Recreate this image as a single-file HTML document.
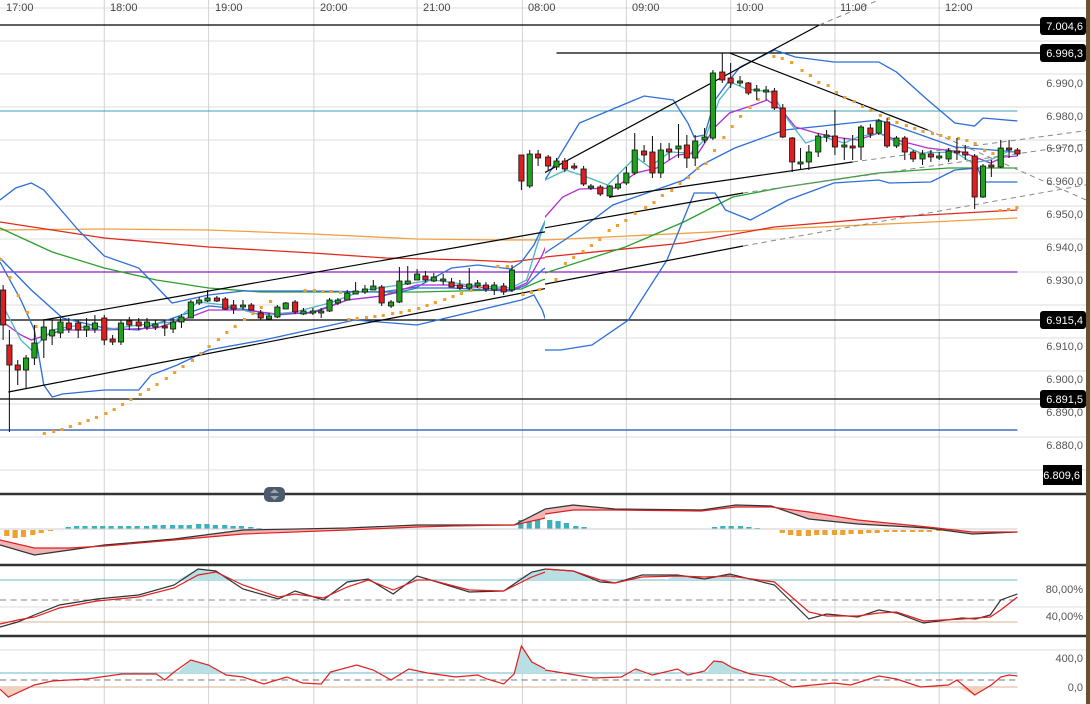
<!DOCTYPE html>
<html><head><meta charset="utf-8"><style>
html,body{margin:0;padding:0;background:#fff;}
svg{display:block;font-family:"Liberation Sans",Arial,sans-serif;}
.ax{font-size:11px;fill:#555;text-anchor:end;}
.tm{font-size:11px;fill:#444;}
.bx{font-size:11px;fill:#fff;text-anchor:end;}
.g rect{fill:#1fa31f;stroke:#111;stroke-width:.8}
.r rect{fill:#dd1f1f;stroke:#111;stroke-width:.8}
line.w{stroke:#111;stroke-width:1}
</style></head><body>
<svg width="1090" height="704" viewBox="0 0 1090 704" xmlns="http://www.w3.org/2000/svg" xmlns:xlink="http://www.w3.org/1999/xlink">
<defs>
<clipPath id="cl"><rect x="0" y="0" width="545" height="704"/></clipPath>
<clipPath id="cr"><rect x="545" y="0" width="545" height="704"/></clipPath>
<g id="d">
<!-- horizontal grid -->
<g stroke="#dcdcdc" stroke-width="1">
<line x1="0" y1="8" x2="1087" y2="8"/><line x1="0" y1="41" x2="1087" y2="41"/><line x1="0" y1="74" x2="1087" y2="74"/><line x1="0" y1="107" x2="1087" y2="107"/><line x1="0" y1="140" x2="1087" y2="140"/><line x1="0" y1="173" x2="1087" y2="173"/><line x1="0" y1="206" x2="1087" y2="206"/><line x1="0" y1="239" x2="1087" y2="239"/><line x1="0" y1="272" x2="1087" y2="272"/><line x1="0" y1="305" x2="1087" y2="305"/><line x1="0" y1="338" x2="1087" y2="338"/><line x1="0" y1="371" x2="1087" y2="371"/><line x1="0" y1="404" x2="1087" y2="404"/><line x1="0" y1="437" x2="1087" y2="437"/><line x1="0" y1="470" x2="1087" y2="470"/>
<line x1="0" y1="607" x2="1087" y2="607"/><line x1="0" y1="650" x2="1087" y2="650"/>
</g>
<g stroke="#d4d4d4" stroke-width="1">
<line x1="100" y1="0" x2="100" y2="704"/><line x1="200" y1="0" x2="200" y2="704"/><line x1="301" y1="0" x2="301" y2="704"/><line x1="400" y1="0" x2="400" y2="704"/><line x1="501" y1="0" x2="501" y2="704"/><line x1="623" y1="0" x2="623" y2="704"/><line x1="723" y1="0" x2="723" y2="704"/><line x1="823" y1="0" x2="823" y2="704"/><line x1="923" y1="0" x2="923" y2="704"/>
</g>

<line x1="0" y1="25" x2="1040" y2="25" stroke="#000" stroke-width="1.3"/>
<line x1="556" y1="53" x2="1040" y2="53" stroke="#000" stroke-width="1.3"/>
<line x1="0" y1="111" x2="998" y2="111" stroke="#3aa0b8" stroke-width="1"/>
<line x1="0" y1="272" x2="998" y2="272" stroke="#8a1fc8" stroke-width="1.2"/>
<line x1="0" y1="320" x2="1040" y2="320" stroke="#000" stroke-width="1.3"/>
<line x1="0" y1="399" x2="1040" y2="399" stroke="#000" stroke-width="1.3"/>
<line x1="0" y1="430" x2="998" y2="430" stroke="#1f50b0" stroke-width="1.3"/>

<g fill="none" stroke-width="1.3">
<polyline stroke="#f0a040" points="0,230 100,229 200,230 300,234 400,239 480,240 545,240 745,230 998,218"/>
<polyline stroke="#e02a1e" points="0,222 100,238 200,247 300,253 370,258 450,260 490,262 520,258 545,257 678,243 765,227 878,217 998,210"/>
<polyline stroke="#2ca02c" points="0,228 50,252 100,268 150,280 200,288 250,292 300,292 400,292 480,290 500,289 520,280 545,273 622,247 678,222 725,197 775,187 865,173 932,168 998,168"/>
<polyline stroke="#2f6fd8" points="0,200 15,188 30,183 42,190 75,230 100,256 133,268 165,303 200,295 233,291 300,291 366,292 400,287 433,268 458,265 490,269 500,262 512,245 530,205 545,180 578,123 640,96 668,100 682,123 688,137 698,135 708,100 722,80 732,67 765,50 785,57 822,62 865,62 882,72 912,100 938,123 957,126 965,118 998,121"/>
<polyline stroke="#2f6fd8" points="0,258 30,290 60,318 100,328 133,330 166,318 200,306 233,309 266,315 300,312 333,300 366,296 400,288 433,288 466,290 490,291 505,285 520,270 545,253 578,230 610,205 678,180 695,165 727,148 775,130 865,120 938,147 998,152"/>
<polyline stroke="#2f6fd8" points="0,262 20,300 33,330 42,385 50,397 60,394 100,390 133,390 145,375 170,365 200,350 253,340 340,320 400,325 500,300 512,295 520,310 530,340 545,350 560,350 590,345 625,320 662,260 688,193 708,193 718,210 742,220 778,200 822,183 865,180 875,183 915,182 938,170 960,168 965,182 998,182"/>
<polyline stroke="#b030d0" points="0,320 20,335 30,340 60,330 100,330 150,328 180,318 200,310 233,310 266,314 300,313 333,300 366,296 400,285 433,285 466,288 490,290 505,283 520,255 530,230 545,217 562,197 578,189 612,188 632,173 652,168 672,155 692,153 708,127 722,113 745,105 758,100 772,110 785,127 805,133 822,137 845,140 865,133 882,140 912,148 945,152 972,163 985,157 998,156"/>
<polyline stroke="#4fb8c4" points="0,300 20,340 30,350 50,330 70,326 100,330 133,325 166,322 190,302 216,305 250,315 283,312 316,303 350,290 383,285 416,280 450,285 490,288 505,280 515,245 530,200 545,180 565,170 585,177 605,185 632,157 645,167 665,152 685,153 698,140 712,100 725,83 738,89 762,92 778,120 795,143 812,137 832,143 845,137 865,133 882,142 905,153 938,152 955,163 972,160 988,152 998,152"/>
</g>

<g stroke="#000" stroke-width="1.2" fill="none">
<line x1="42" y1="320" x2="735" y2="193"/>
<line x1="8" y1="392" x2="735" y2="246"/>
<line x1="607" y1="197" x2="840" y2="162"/>
<line x1="528" y1="182" x2="808" y2="25"/>
<line x1="722" y1="53" x2="912" y2="130"/>
</g>
<g stroke="#888" stroke-width="1" stroke-dasharray="5,4" fill="none">
<line x1="735" y1="246" x2="1090" y2="180"/>
<line x1="840" y1="162" x2="1090" y2="127"/>
<line x1="808" y1="25" x2="865" y2="0"/>
<line x1="912" y1="130" x2="1090" y2="212"/>
<line x1="735" y1="193" x2="1090" y2="140"/>
</g>

<g fill="#f0a030">
<rect x="-1" y="258" width="3" height="3"/><rect x="8" y="276" width="3" height="3"/><rect x="16" y="294" width="3" height="3"/><rect x="25" y="311" width="3" height="3"/><rect x="33" y="325" width="3" height="3"/>
<rect x="41" y="432" width="3" height="3"/><rect x="50" y="430" width="3" height="3"/><rect x="58" y="428" width="3" height="3"/><rect x="66" y="425" width="3" height="3"/><rect x="75" y="422" width="3" height="3"/><rect x="83" y="419" width="3" height="3"/><rect x="91" y="416" width="3" height="3"/><rect x="100" y="412" width="3" height="3"/><rect x="108" y="408" width="3" height="3"/><rect x="116" y="403" width="3" height="3"/><rect x="124" y="398" width="3" height="3"/><rect x="133" y="393" width="3" height="3"/><rect x="141" y="388" width="3" height="3"/><rect x="149" y="383" width="3" height="3"/><rect x="158" y="377" width="3" height="3"/><rect x="166" y="371" width="3" height="3"/><rect x="174" y="365" width="3" height="3"/><rect x="183" y="359" width="3" height="3"/><rect x="191" y="352" width="3" height="3"/><rect x="199" y="345" width="3" height="3"/><rect x="208" y="338" width="3" height="3"/><rect x="216" y="331" width="3" height="3"/><rect x="224" y="325" width="3" height="3"/><rect x="233" y="318" width="3" height="3"/><rect x="241" y="312" width="3" height="3"/><rect x="249" y="306" width="3" height="3"/><rect x="258" y="300" width="3" height="3"/>
<rect x="291" y="289" width="3" height="3"/><rect x="300" y="289" width="3" height="3"/><rect x="308" y="290" width="3" height="3"/><rect x="316" y="290" width="3" height="3"/><rect x="325" y="291" width="3" height="3"/>
<rect x="333" y="318" width="3" height="3"/><rect x="341" y="317" width="3" height="3"/><rect x="350" y="316" width="3" height="3"/><rect x="358" y="315" width="3" height="3"/><rect x="366" y="314" width="3" height="3"/><rect x="375" y="312" width="3" height="3"/><rect x="383" y="311" width="3" height="3"/><rect x="391" y="309" width="3" height="3"/><rect x="400" y="307" width="3" height="3"/><rect x="408" y="304" width="3" height="3"/><rect x="416" y="301" width="3" height="3"/><rect x="425" y="298" width="3" height="3"/><rect x="433" y="295" width="3" height="3"/><rect x="441" y="292" width="3" height="3"/><rect x="450" y="289" width="3" height="3"/><rect x="458" y="286" width="3" height="3"/><rect x="476" y="265" width="3" height="3"/><rect x="485" y="265" width="3" height="3"/><rect x="500" y="293" width="3" height="3"/><rect x="508" y="291" width="3" height="3"/><rect x="516" y="288" width="3" height="3"/>
<rect x="554" y="278" width="3" height="3"/><rect x="563" y="262" width="3" height="3"/><rect x="571" y="256" width="3" height="3"/><rect x="580" y="250" width="3" height="3"/><rect x="588" y="244" width="3" height="3"/><rect x="596" y="238" width="3" height="3"/><rect x="605" y="229" width="3" height="3"/><rect x="613" y="224" width="3" height="3"/><rect x="621" y="219" width="3" height="3"/><rect x="630" y="212" width="3" height="3"/><rect x="640" y="206" width="3" height="3"/><rect x="648" y="201" width="3" height="3"/><rect x="656" y="194" width="3" height="3"/><rect x="665" y="189" width="3" height="3"/><rect x="673" y="182" width="3" height="3"/><rect x="681" y="176" width="3" height="3"/><rect x="690" y="167" width="3" height="3"/><rect x="698" y="162" width="3" height="3"/><rect x="706" y="149" width="3" height="3"/><rect x="715" y="136" width="3" height="3"/><rect x="723" y="125" width="3" height="3"/><rect x="731" y="115" width="3" height="3"/><rect x="740" y="106" width="3" height="3"/><rect x="748" y="98" width="3" height="3"/>
<rect x="763" y="55" width="3" height="3"/><rect x="771" y="57" width="3" height="3"/><rect x="780" y="61" width="3" height="3"/><rect x="790" y="69" width="3" height="3"/><rect x="798" y="74" width="3" height="3"/><rect x="806" y="81" width="3" height="3"/><rect x="815" y="84" width="3" height="3"/><rect x="823" y="91" width="3" height="3"/><rect x="831" y="96" width="3" height="3"/><rect x="840" y="100" width="3" height="3"/><rect x="848" y="105" width="3" height="3"/><rect x="856" y="109" width="3" height="3"/><rect x="865" y="114" width="3" height="3"/><rect x="873" y="117" width="3" height="3"/><rect x="881" y="121" width="3" height="3"/><rect x="890" y="124" width="3" height="3"/><rect x="898" y="127" width="3" height="3"/><rect x="906" y="130" width="3" height="3"/><rect x="915" y="132" width="3" height="3"/><rect x="923" y="134" width="3" height="3"/><rect x="931" y="136" width="3" height="3"/><rect x="940" y="137" width="3" height="3"/><rect x="948" y="139" width="3" height="3"/><rect x="956" y="142" width="3" height="3"/><rect x="965" y="149" width="3" height="3"/><rect x="973" y="152" width="3" height="3"/>
<rect x="980" y="209" width="3" height="3"/><rect x="988" y="208" width="3" height="3"/><rect x="996" y="206" width="3" height="3"/>
</g>

<g>
<line class="w" x1="9" y1="330" x2="9" y2="432"/>
<line class="w" x1="3" y1="285" x2="3" y2="340"/><line class="w" x1="17" y1="360" x2="17" y2="385"/><line class="w" x1="25" y1="355" x2="25" y2="388"/><line class="w" x1="33" y1="325" x2="33" y2="365"/><line class="w" x1="42" y1="319" x2="42" y2="358"/><line class="w" x1="50" y1="320" x2="50" y2="345"/><line class="w" x1="58" y1="318" x2="58" y2="338"/><line class="w" x1="66" y1="318" x2="66" y2="333"/><line class="w" x1="75" y1="320" x2="75" y2="338"/><line class="w" x1="83" y1="318" x2="83" y2="337"/><line class="w" x1="91" y1="315" x2="91" y2="333"/><line class="w" x1="100" y1="315" x2="100" y2="345"/><line class="w" x1="108" y1="335" x2="108" y2="345"/><line class="w" x1="116" y1="320" x2="116" y2="345"/><line class="w" x1="124" y1="317" x2="124" y2="330"/><line class="w" x1="133" y1="318" x2="133" y2="330"/><line class="w" x1="141" y1="318" x2="141" y2="330"/><line class="w" x1="149" y1="320" x2="149" y2="330"/><line class="w" x1="158" y1="320" x2="158" y2="336"/><line class="w" x1="166" y1="318" x2="166" y2="333"/><line class="w" x1="174" y1="314" x2="174" y2="328"/><line class="w" x1="183" y1="300" x2="183" y2="318"/><line class="w" x1="191" y1="297" x2="191" y2="305"/><line class="w" x1="199" y1="290" x2="199" y2="302"/><line class="w" x1="208" y1="296" x2="208" y2="302"/><line class="w" x1="216" y1="297" x2="216" y2="310"/><line class="w" x1="224" y1="300" x2="224" y2="314"/><line class="w" x1="233" y1="300" x2="233" y2="310"/><line class="w" x1="241" y1="303" x2="241" y2="310"/><line class="w" x1="250" y1="310" x2="250" y2="320"/><line class="w" x1="258" y1="313" x2="258" y2="320"/><line class="w" x1="266" y1="305" x2="266" y2="318"/><line class="w" x1="274" y1="302" x2="274" y2="309"/><line class="w" x1="283" y1="300" x2="283" y2="314"/><line class="w" x1="291" y1="308" x2="291" y2="315"/><line class="w" x1="300" y1="308" x2="300" y2="315"/><line class="w" x1="308" y1="308" x2="308" y2="318"/><line class="w" x1="316" y1="298" x2="316" y2="312"/><line class="w" x1="324" y1="298" x2="324" y2="305"/><line class="w" x1="333" y1="290" x2="333" y2="300"/><line class="w" x1="341" y1="282" x2="341" y2="294"/><line class="w" x1="350" y1="285" x2="350" y2="294"/><line class="w" x1="358" y1="280" x2="358" y2="290"/><line class="w" x1="366" y1="285" x2="366" y2="306"/><line class="w" x1="375" y1="300" x2="375" y2="308"/><line class="w" x1="383" y1="267" x2="383" y2="303"/><line class="w" x1="391" y1="266" x2="391" y2="285"/><line class="w" x1="400" y1="269" x2="400" y2="280"/><line class="w" x1="408" y1="271" x2="408" y2="282"/><line class="w" x1="416" y1="273" x2="416" y2="282"/><line class="w" x1="425" y1="274" x2="425" y2="285"/><line class="w" x1="433" y1="278" x2="433" y2="287"/><line class="w" x1="441" y1="280" x2="441" y2="290"/><line class="w" x1="450" y1="268" x2="450" y2="290"/><line class="w" x1="458" y1="280" x2="458" y2="288"/><line class="w" x1="466" y1="282" x2="466" y2="292"/><line class="w" x1="474" y1="282" x2="474" y2="295"/><line class="w" x1="483" y1="283" x2="483" y2="295"/><line class="w" x1="491" y1="265" x2="491" y2="292"/>
<line class="w" x1="500" y1="155" x2="500" y2="190"/><line class="w" x1="508" y1="150" x2="508" y2="188"/><line class="w" x1="516" y1="150" x2="516" y2="166"/><line class="w" x1="548" y1="155" x2="548" y2="170"/><line class="w" x1="556" y1="158" x2="556" y2="170"/><line class="w" x1="564" y1="158" x2="564" y2="172"/><line class="w" x1="573" y1="163" x2="573" y2="170"/><line class="w" x1="582" y1="166" x2="582" y2="186"/><line class="w" x1="589" y1="184" x2="589" y2="190"/><line class="w" x1="598" y1="185" x2="598" y2="196"/><line class="w" x1="607" y1="185" x2="607" y2="198"/><line class="w" x1="615" y1="175" x2="615" y2="190"/><line class="w" x1="623" y1="167" x2="623" y2="185"/><line class="w" x1="631" y1="133" x2="631" y2="175"/><line class="w" x1="640" y1="145" x2="640" y2="162"/><line class="w" x1="648" y1="136" x2="648" y2="178"/><line class="w" x1="656" y1="143" x2="656" y2="178"/><line class="w" x1="664" y1="143" x2="664" y2="160"/><line class="w" x1="673" y1="124" x2="673" y2="158"/><line class="w" x1="681" y1="135" x2="681" y2="168"/><line class="w" x1="689" y1="135" x2="689" y2="166"/><line class="w" x1="698" y1="128" x2="698" y2="143"/><line class="w" x1="706" y1="70" x2="706" y2="140"/><line class="w" x1="715" y1="53" x2="715" y2="83"/><line class="w" x1="723" y1="63" x2="723" y2="88"/><line class="w" x1="732" y1="76" x2="732" y2="86"/><line class="w" x1="740" y1="82" x2="740" y2="95"/><line class="w" x1="748" y1="85" x2="748" y2="100"/><line class="w" x1="757" y1="86" x2="757" y2="100"/><line class="w" x1="765" y1="88" x2="765" y2="110"/><line class="w" x1="773" y1="104" x2="773" y2="138"/><line class="w" x1="782" y1="137" x2="782" y2="172"/><line class="w" x1="790" y1="148" x2="790" y2="170"/><line class="w" x1="798" y1="145" x2="798" y2="170"/><line class="w" x1="807" y1="133" x2="807" y2="157"/><line class="w" x1="815" y1="130" x2="815" y2="142"/><line class="w" x1="823" y1="110" x2="823" y2="155"/><line class="w" x1="832" y1="138" x2="832" y2="160"/><line class="w" x1="840" y1="135" x2="840" y2="160"/><line class="w" x1="848" y1="125" x2="848" y2="160"/><line class="w" x1="857" y1="124" x2="857" y2="138"/><line class="w" x1="865" y1="119" x2="865" y2="135"/><line class="w" x1="873" y1="118" x2="873" y2="148"/><line class="w" x1="882" y1="136" x2="882" y2="148"/><line class="w" x1="890" y1="136" x2="890" y2="160"/><line class="w" x1="898" y1="150" x2="898" y2="162"/><line class="w" x1="907" y1="150" x2="907" y2="165"/><line class="w" x1="915" y1="150" x2="915" y2="162"/><line class="w" x1="923" y1="152" x2="923" y2="160"/><line class="w" x1="932" y1="148" x2="932" y2="162"/><line class="w" x1="940" y1="138" x2="940" y2="160"/><line class="w" x1="948" y1="145" x2="948" y2="160"/><line class="w" x1="957" y1="154" x2="957" y2="209"/><line class="w" x1="965" y1="164" x2="965" y2="198"/><line class="w" x1="973" y1="160" x2="973" y2="177"/><line class="w" x1="982" y1="140" x2="982" y2="168"/><line class="w" x1="990" y1="140" x2="990" y2="158"/><line class="w" x1="998" y1="148" x2="998" y2="156"/>
</g>
<g class="r">
<rect x="0.5" y="290" width="5" height="35"/><rect x="6.5" y="345" width="5" height="20"/><rect x="14.5" y="365" width="5" height="5"/><rect x="63.5" y="323" width="5" height="6"/><rect x="72.5" y="323" width="5" height="7"/><rect x="97.5" y="318" width="5" height="22"/><rect x="105.5" y="339" width="5" height="3"/><rect x="121.5" y="321" width="5" height="4"/><rect x="130.5" y="322" width="5" height="4"/><rect x="155.5" y="326" width="5" height="2"/><rect x="205.5" y="298" width="5" height="3"/><rect x="213.5" y="299" width="5" height="10"/><rect x="221.5" y="305" width="5" height="4"/><rect x="238.5" y="305" width="5" height="5"/><rect x="247.5" y="313" width="5" height="5"/><rect x="280.5" y="302" width="5" height="10"/><rect x="363.5" y="287" width="5" height="16"/><rect x="405.5" y="276" width="5" height="4"/><rect x="430.5" y="282" width="5" height="5"/><rect x="438.5" y="285" width="5" height="3"/><rect x="463.5" y="285" width="5" height="4"/><rect x="480.5" y="286" width="5" height="6"/>
<rect x="497.5" y="155" width="5" height="26"/><rect x="513.5" y="154" width="5" height="4"/><rect x="545.5" y="157" width="5" height="9"/><rect x="561.5" y="161" width="5" height="8"/><rect x="570.5" y="166" width="5" height="2"/><rect x="579.5" y="169" width="5" height="15"/><rect x="595.5" y="187" width="5" height="7"/><rect x="637.5" y="151" width="5" height="4"/><rect x="645.5" y="152" width="5" height="21"/><rect x="661.5" y="149" width="5" height="3"/><rect x="678.5" y="145" width="5" height="13"/><rect x="712.5" y="72" width="5" height="8"/><rect x="720.5" y="78" width="5" height="5"/><rect x="737.5" y="83" width="5" height="10"/><rect x="762.5" y="91" width="5" height="17"/><rect x="770.5" y="108" width="5" height="29"/><rect x="779.5" y="138" width="5" height="24"/><rect x="820.5" y="136" width="5" height="11"/><rect x="837.5" y="146" width="5" height="2"/><rect x="854.5" y="128" width="5" height="6"/><rect x="870.5" y="122" width="5" height="24"/><rect x="887.5" y="138" width="5" height="14"/><rect x="895.5" y="152" width="5" height="7"/><rect x="912.5" y="154" width="5" height="3"/><rect x="937.5" y="151" width="5" height="2"/><rect x="945.5" y="152" width="5" height="3"/><rect x="954.5" y="156" width="5" height="41"/><rect x="970.5" y="165" width="5" height="2"/><rect x="987.5" y="148" width="5" height="2"/><rect x="995.5" y="150" width="5" height="4"/>
</g>
<g class="g">
<rect x="22.5" y="358" width="5" height="12"/><rect x="30.5" y="343" width="5" height="15"/><rect x="39.5" y="327" width="5" height="13"/><rect x="47.5" y="330" width="5" height="6"/><rect x="55.5" y="322" width="5" height="11"/><rect x="80.5" y="326" width="5" height="4"/><rect x="88.5" y="323" width="5" height="6"/><rect x="113.5" y="323" width="5" height="19"/><rect x="138.5" y="322" width="5" height="5"/><rect x="146.5" y="324" width="5" height="3"/><rect x="163.5" y="322" width="5" height="7"/><rect x="171.5" y="317" width="5" height="5"/><rect x="180.5" y="302" width="5" height="16"/><rect x="188.5" y="300" width="5" height="3"/><rect x="196.5" y="298" width="5" height="3"/><rect x="230.5" y="305" width="5" height="2"/><rect x="255.5" y="316" width="5" height="3"/><rect x="263.5" y="307" width="5" height="10"/><rect x="271.5" y="303" width="5" height="6"/><rect x="288.5" y="311" width="5" height="3"/><rect x="297.5" y="311" width="5" height="2"/><rect x="305.5" y="311" width="5" height="2"/><rect x="313.5" y="300" width="5" height="11"/><rect x="321.5" y="300" width="5" height="3"/><rect x="330.5" y="293" width="5" height="7"/><rect x="338.5" y="291" width="5" height="3"/><rect x="347.5" y="289" width="5" height="3"/><rect x="355.5" y="286" width="5" height="4"/><rect x="372.5" y="302" width="5" height="4"/><rect x="380.5" y="281" width="5" height="21"/><rect x="388.5" y="281" width="5" height="3"/><rect x="397.5" y="274" width="5" height="6"/><rect x="413.5" y="277" width="5" height="4"/><rect x="422.5" y="279" width="5" height="2"/><rect x="447.5" y="284" width="5" height="4"/><rect x="455.5" y="283" width="5" height="3"/><rect x="471.5" y="285" width="5" height="5"/><rect x="488.5" y="270" width="5" height="20"/>
<rect x="505.5" y="154" width="5" height="32"/><rect x="553.5" y="161" width="5" height="6"/><rect x="586.5" y="186" width="5" height="2"/><rect x="604.5" y="186" width="5" height="10"/><rect x="612.5" y="184" width="5" height="4"/><rect x="620.5" y="173" width="5" height="10"/><rect x="628.5" y="150" width="5" height="23"/><rect x="653.5" y="150" width="5" height="23"/><rect x="670.5" y="146" width="5" height="3"/><rect x="686.5" y="141" width="5" height="17"/><rect x="695.5" y="137" width="5" height="3"/><rect x="703.5" y="73" width="5" height="65"/><rect x="729.5" y="81" width="5" height="2"/><rect x="745.5" y="89" width="5" height="2"/><rect x="754.5" y="90" width="5" height="2"/><rect x="787.5" y="162" width="5" height="2"/><rect x="795.5" y="152" width="5" height="10"/><rect x="804.5" y="136" width="5" height="16"/><rect x="812.5" y="135" width="5" height="2"/><rect x="829.5" y="145" width="5" height="2"/><rect x="845.5" y="127" width="5" height="20"/><rect x="862.5" y="121" width="5" height="12"/><rect x="879.5" y="138" width="5" height="8"/><rect x="904.5" y="154" width="5" height="5"/><rect x="920.5" y="156" width="5" height="2"/><rect x="929.5" y="151" width="5" height="8"/><rect x="962.5" y="166" width="5" height="31"/><rect x="979.5" y="148" width="5" height="19"/>
</g>

<!-- MACD -->
<g fill="#f0a030"><rect x="4" y="530" width="5" height="6"/><rect x="12" y="530" width="5" height="8"/><rect x="20" y="530" width="5" height="7"/><rect x="29" y="530" width="5" height="5"/><rect x="37" y="530" width="5" height="3"/><rect x="46" y="530" width="5" height="1"/>
<rect x="770" y="530" width="5" height="3"/><rect x="778" y="530" width="5" height="5"/><rect x="786" y="530" width="5" height="6"/><rect x="795" y="530" width="5" height="6"/><rect x="803" y="530" width="5" height="5"/><rect x="811" y="530" width="5" height="5"/><rect x="820" y="530" width="5" height="5"/><rect x="828" y="530" width="5" height="5"/><rect x="836" y="530" width="5" height="4"/><rect x="845" y="530" width="5" height="4"/><rect x="853" y="530" width="5" height="3"/><rect x="861" y="530" width="5" height="3"/><rect x="870" y="530" width="5" height="2"/><rect x="878" y="530" width="5" height="2"/><rect x="886" y="530" width="5" height="2"/><rect x="895" y="530" width="5" height="2"/><rect x="903" y="530" width="5" height="2"/><rect x="911" y="530" width="5" height="2"/><rect x="920" y="530" width="5" height="1"/><rect x="928" y="530" width="5" height="1"/></g>
<g fill="#3cb0bc"><rect x="63" y="527" width="5" height="2"/><rect x="71" y="526" width="5" height="3"/><rect x="79" y="526" width="5" height="3"/><rect x="88" y="526" width="5" height="3"/><rect x="96" y="526" width="5" height="3"/><rect x="104" y="526" width="5" height="3"/><rect x="113" y="526" width="5" height="3"/><rect x="121" y="526" width="5" height="3"/><rect x="129" y="526" width="5" height="3"/><rect x="138" y="526" width="5" height="3"/><rect x="146" y="525" width="5" height="4"/><rect x="154" y="525" width="5" height="4"/><rect x="163" y="525" width="5" height="4"/><rect x="171" y="525" width="5" height="4"/><rect x="179" y="525" width="5" height="4"/><rect x="188" y="524" width="5" height="5"/><rect x="196" y="524" width="5" height="5"/><rect x="204" y="525" width="5" height="4"/><rect x="213" y="525" width="5" height="4"/><rect x="221" y="526" width="5" height="3"/><rect x="229" y="526" width="5" height="3"/><rect x="238" y="527" width="5" height="2"/><rect x="246" y="528" width="5" height="1"/>
<rect x="497" y="520" width="5" height="9"/><rect x="505" y="518" width="5" height="11"/><rect x="513" y="517" width="5" height="12"/><rect x="547" y="520" width="5" height="9"/><rect x="555" y="521" width="5" height="8"/><rect x="563" y="523" width="5" height="6"/><rect x="572" y="526" width="5" height="3"/><rect x="580" y="527" width="5" height="2"/><rect x="705" y="527" width="5" height="2"/><rect x="713" y="526" width="5" height="3"/><rect x="721" y="526" width="5" height="3"/><rect x="730" y="526" width="5" height="3"/><rect x="738" y="527" width="5" height="2"/><rect x="746" y="528" width="5" height="1"/></g>
<line x1="0" y1="529" x2="998" y2="529" stroke="#ccc" stroke-width="1"/>
<path d="M0,545 L33,555 L67,550 L100,545 L167,539 L233,530 L333,528 L400,525 L433,525 L493,525 L523,509 L545,509 L572,505 L612,509 L695,510 L728,505 L762,506 L798,519 L845,524 L912,528 L955,534 L998,532 L955,532 L912,527 L845,520 L798,512 L762,507 L728,507 L695,511 L612,510 L572,510 L545,514 L523,518 L493,525 L433,526 L400,527 L333,530 L233,534 L167,540 L100,546 L67,548 L33,548 L0,540 Z" fill="#f0b4b4"/>
<polyline fill="none" stroke="#333" stroke-width="1.2" points="0,545 33,555 67,550 100,545 167,539 233,530 333,528 400,525 433,525 493,525 523,509 545,509 572,505 612,509 695,510 728,505 762,506 798,519 845,524 912,528 955,534 998,532"/>
<polyline fill="none" stroke="#e02020" stroke-width="1.2" points="0,540 33,548 67,548 100,546 167,540 233,534 333,530 400,527 433,526 493,525 523,518 545,514 572,510 612,510 695,511 728,507 762,507 798,512 845,520 912,527 955,532 998,532"/>

<!-- Stoch -->
<line x1="0" y1="580" x2="998" y2="580" stroke="#6bb8c4" stroke-width="1"/>
<line x1="0" y1="600" x2="998" y2="600" stroke="#888" stroke-width="1" stroke-dasharray="6,4"/>
<line x1="0" y1="622" x2="998" y2="622" stroke="#d8b090" stroke-width="1"/>
<path d="M170,580 L190,569 L207,571 L225,580 Z M493,580 L510,572 L523,569 L545,569 L572,571 L590,580 Z M660,580 L672,575 L698,579 L722,574 L730,580 Z" fill="#b8e0e4"/>
<polyline fill="none" stroke="#333" stroke-width="1.2" points="0,627 17,622 33,615 57,605 93,599 133,595 167,585 190,569 207,571 233,589 267,599 283,591 310,600 333,582 353,579 377,594 400,576 413,580 450,592 483,591 510,572 523,569 545,569 572,571 598,582 612,583 638,575 672,575 698,579 722,574 765,585 798,619 815,614 845,617 865,610 882,613 908,623 945,618 958,619 972,615 982,600 998,594"/>
<polyline fill="none" stroke="#e02020" stroke-width="1.2" points="0,624 17,620 33,617 57,608 93,601 133,597 167,588 190,575 207,572 233,585 267,597 283,594 310,598 333,587 353,580 377,590 400,580 413,580 450,590 483,591 510,577 523,572 545,569 572,571 598,580 612,583 638,577 672,576 698,577 722,576 765,582 798,612 815,616 845,616 865,613 882,612 908,621 945,619 958,618 972,617 982,610 998,597"/>

<!-- CCI -->
<line x1="0" y1="673" x2="998" y2="673" stroke="#6bb8c4" stroke-width="1"/>
<line x1="0" y1="680" x2="998" y2="680" stroke="#777" stroke-width="1" stroke-dasharray="6,4"/>
<line x1="0" y1="687" x2="998" y2="687" stroke="#d8b090" stroke-width="1"/>
<path d="M0,687 L8,697 L28,687 Z M940,687 L957,695 L968,687 Z" fill="#f2d0c0"/>
<path d="M170,673 L183,660 L200,665 L212,673 Z M493,673 L500,646 L510,662 L523,669 L545,670 L555,673 Z M630,673 L632,669 L640,673 Z M700,673 L707,661 L715,662 L725,668 L735,673 Z" fill="#b8e0e4"/>
<polyline fill="none" stroke="#e02020" stroke-width="1.2" points="0,689 8,697 33,685 50,681 83,679 117,674 150,674 158,680 167,672 183,660 200,665 217,675 233,677 253,684 275,677 290,683 308,684 317,672 342,665 358,670 375,680 392,669 410,673 437,677 458,675 467,679 483,684 493,674 500,646 510,662 523,669 545,670 592,678 618,677 632,669 648,675 672,669 682,675 698,671 707,661 715,662 725,668 742,674 762,677 782,687 802,685 822,683 838,685 865,676 882,679 905,687 932,685 940,680 957,695 973,685 982,677 990,675 998,676"/>
</g>
</defs>
<rect width="1090" height="704" fill="#fff"/>
<g clip-path="url(#cl)"><use href="#d" xlink:href="#d" transform="matrix(1.0428,0,0,1,0,0)"/></g>
<g clip-path="url(#cr)"><use href="#d" xlink:href="#d" transform="matrix(1.0428,0,0,1,-23.3,0)"/></g>

<g class="tm"><text x="6" y="11">17:00</text><text x="110" y="11">18:00</text><text x="215" y="11">19:00</text><text x="320" y="11">20:00</text><text x="423" y="11">21:00</text><text x="528" y="11">08:00</text><text x="632" y="11">09:00</text><text x="736" y="11">10:00</text><text x="840" y="11">11:00</text><text x="945" y="11">12:00</text></g>

<g stroke="#333" stroke-width="2.5">
<line x1="0" y1="494" x2="1087" y2="494"/><line x1="0" y1="565" x2="1087" y2="565"/><line x1="0" y1="636" x2="1087" y2="636"/>
</g>
<rect x="264" y="487" width="21" height="15" rx="5" fill="#4d5a6c"/>
<path d="M270,493 L274.5,489 L279,493 Z M270,496 L274.5,500 L279,496 Z" fill="#9aa6b6"/>

<rect x="1086" y="0" width="4" height="704" fill="#6a5030"/>
<g class="ax">
<text x="1083" y="87">6.990,0</text><text x="1083" y="120">6.980,0</text><text x="1083" y="152">6.970,0</text><text x="1083" y="185">6.960,0</text><text x="1083" y="218">6.950,0</text><text x="1083" y="251">6.940,0</text><text x="1083" y="284">6.930,0</text><text x="1083" y="350">6.910,0</text><text x="1083" y="383">6.900,0</text><text x="1083" y="416">6.890,0</text><text x="1083" y="449">6.880,0</text>
<text x="1083" y="593">80,00%</text><text x="1083" y="620">40,00%</text><text x="1083" y="662">400,0</text><text x="1083" y="691">0,0</text>
</g>
<rect x="1040" y="17" width="46" height="18" rx="3" fill="#000"/><rect x="1040" y="44" width="46" height="18" rx="3" fill="#000"/><rect x="1040" y="311" width="46" height="18" rx="3" fill="#000"/><rect x="1040" y="390" width="46" height="18" rx="3" fill="#000"/><rect x="1043" y="465" width="39" height="20" fill="#000"/>
<g class="bx">
<text x="1083" y="30">7.004,6</text><text x="1083" y="57">6.996,3</text><text x="1083" y="324">6.915,4</text><text x="1083" y="403">6.891,5</text><text x="1080" y="479">6.809,6</text>
</g>
</svg>
</body></html>
